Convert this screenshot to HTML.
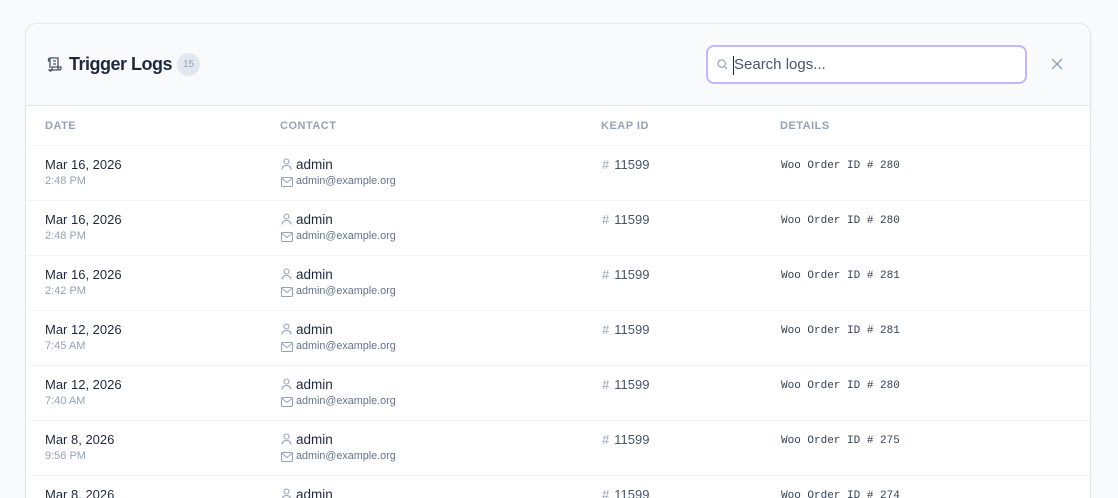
<!DOCTYPE html>
<html><head><style>
*{box-sizing:border-box;margin:0;padding:0}
html,body{width:1118px;height:498px;overflow:hidden}
body{background:#f8fafc;font-family:"Liberation Sans",sans-serif;position:relative}
.card{position:absolute;left:25px;top:23px;width:1066px;height:475px;background:#fff;border:1px solid #e2e8f0;border-bottom:none;border-radius:12px 12px 0 0;overflow:hidden;box-shadow:0 1px 3px rgba(0,0,0,.05)}
.hdr{height:82px;background:#f8fafc;border-bottom:1px solid #e2e8f0;position:relative}
.title{position:absolute;left:43px;top:30px;font-size:18px;font-weight:bold;color:#1e293b;letter-spacing:-0.5px}
.ticon{position:absolute;left:20px;top:32px}
.badge{position:absolute;left:151px;top:29px;width:23px;height:23px;border-radius:50%;background:#e2e8f0;color:#94a3b8;font-size:10px;text-align:center;line-height:23px}
.search{position:absolute;left:680px;top:21px;width:321px;height:39px;border:2px solid #c4b5fd;border-radius:8px;background:#fff}
.search span{position:absolute;left:26px;top:9px;font-size:15px;color:#475569}
.search .cur{position:absolute;left:25px;top:9px;width:1px;height:19px;background:#1e293b}
.close{position:absolute;left:1025px;top:34px}
.th{position:absolute;top:96px;font-size:11px;font-weight:bold;color:#94a3b8;letter-spacing:.5px}
.row{position:absolute;left:0;width:1066px;height:55px;border-top:1px solid #f1f5f9}
.d{position:absolute;left:19px;top:11px;font-size:13px;color:#1e293b}
.t{position:absolute;left:19px;top:29px;font-size:11px;color:#94a3b8}
.n{position:absolute;left:270px;top:11px;font-size:13.5px;color:#1e293b}
.e{position:absolute;left:270px;top:29px;font-size:10.8px;color:#64748b}
.ui{position:absolute;left:255px;top:12px}
.mi{position:absolute;left:255px;top:31px}
.k{position:absolute;left:576px;top:11px;font-size:13px;color:#475569}
.k b{font-weight:normal;color:#94a3b8;margin-right:5px}
.w{position:absolute;left:755px;top:14px;font-family:"Liberation Mono",monospace;font-size:11px;color:#334155}
</style></head><body>
<div class="card">
<div class="hdr">
<svg class="ticon" width="16" height="16" viewBox="0 0 16 16" fill="none" stroke="#475569" stroke-width="1.3"><path d="M4 2h8v10.5a1.5 1.5 0 0 0 3 0V11H6v1.5A1.5 1.5 0 0 1 3 14h9M4 2a1.5 1.5 0 0 0-1.5 1.5V5H4M4 2v10M7 5h3M7 8h3"/></svg>
<div class="title">Trigger Logs</div>
<div class="badge">15</div>
<div class="search"><svg style="position:absolute;left:9px;top:12px" width="11" height="11" viewBox="0 0 12 12" fill="none" stroke="#94a3b8" stroke-width="1.3"><circle cx="5" cy="5" r="4"/><path d="M8 8l3 3"/></svg><div class="cur"></div><span>Search logs...</span></div>
<svg class="close" width="12" height="12" viewBox="0 0 12 12" stroke="#94a3b8" stroke-width="1.4"><path d="M1 1l10 10M11 1L1 11"/></svg>
</div>
<div class="th" style="left:19px">DATE</div>
<div class="th" style="left:254px">CONTACT</div>
<div class="th" style="left:575px">KEAP ID</div>
<div class="th" style="left:754px">DETAILS</div>
<div id="rows"></div>
</div>
<script>
var d=[["Mar 16, 2026","2:48 PM","280"],["Mar 16, 2026","2:48 PM","280"],["Mar 16, 2026","2:42 PM","281"],["Mar 12, 2026","7:45 AM","281"],["Mar 12, 2026","7:40 AM","280"],["Mar 8, 2026","9:56 PM","275"],["Mar 8, 2026","9:50 PM","274"]];
var h="";d.forEach(function(r,i){h+='<div class="row" style="top:'+(121+i*55)+'px"><div class="d">'+r[0]+'</div><div class="t">'+r[1]+'</div><svg class="ui" width="11" height="12" viewBox="0 0 11 12" fill="none" stroke="#94a3b8" stroke-width="1.1"><circle cx="5.5" cy="3.5" r="2.5"/><path d="M1 11.5c0-2.5 2-4 4.5-4s4.5 1.5 4.5 4"/></svg><div class="n">admin</div><svg class="mi" width="12" height="10" viewBox="0 0 12 10" fill="none" stroke="#94a3b8" stroke-width="1"><rect x=".5" y=".5" width="11" height="9" rx="1"/><path d="M.5 1l5.5 4.5L11.5 1"/></svg><div class="e">admin@example.org</div><div class="k"><b>#</b>11599</div><div class="w">Woo Order ID # '+r[2]+'</div></div>'});
document.getElementById("rows").innerHTML=h;
</script>
</body></html>
